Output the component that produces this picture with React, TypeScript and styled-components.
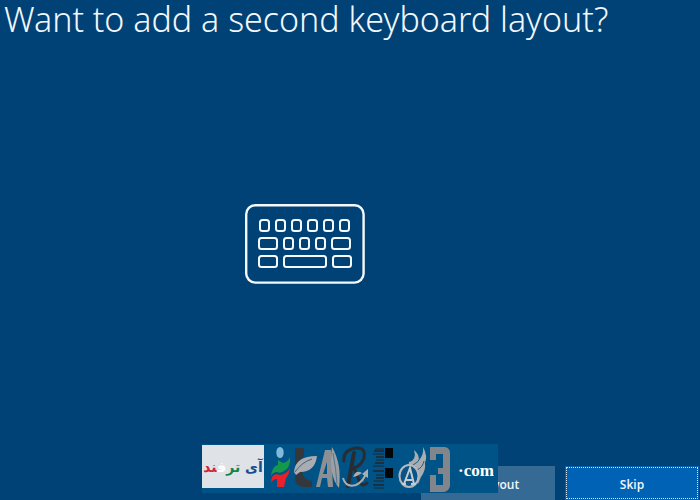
import React from "react";
import styled, { createGlobalStyle } from "styled-components";

const GlobalStyle = createGlobalStyle`
  * { box-sizing: border-box; }
  body {
    margin: 0;
    background: #004275;
    color: #fff;
    font-family: "Open Sans", "Noto Sans", sans-serif;
  }
`;

const Page = styled.div`
  display: flex;
  flex-direction: column;
  min-height: 100vh;
`;

const Title = styled.h1`
  margin: 0;
  padding: 0 4px;
  font-family: "Noto Sans", "Open Sans", sans-serif;
  font-size: 34px;
  line-height: 38px;
  font-weight: 300;
  color: #f2f7fc;
`;

const Stage = styled.main`
  flex: 1;
  display: flex;
  align-items: center;
  justify-content: center;
  padding: 0 90px 16px 0;
`;

const Footer = styled.footer`
  position: relative;
  display: flex;
  justify-content: flex-end;
  gap: 10px;
  padding: 0 1px 0 8px;
`;

const Button = styled.button<{ $primary?: boolean }>`
  width: 134px;
  height: 34px;
  padding: 2px 0 0;
  border: 0;
  outline: ${(p) => (p.$primary ? "1px dotted #d5e6f7" : "none")};
  outline-offset: -2px;
  background: ${(p) => (p.$primary ? "#0062b5" : "#356a94")};
  color: #f2f7fc;
  font-family: "Open Sans", sans-serif;
  font-size: 12px;
  font-weight: 600;
`;

const Watermark = styled.div`
  position: absolute;
  left: 202px;
  bottom: 7px;
  display: flex;
  width: 296px;
  height: 49px;
  background: #005386;
`;

const Plate = styled.div`
  width: 62px;
  height: 43px;
  margin-top: 1px;
  background: #dfe2e6;
  font-family: "DejaVu Sans", sans-serif;
  font-size: 14px;
  font-weight: 700;
  line-height: 44px;
  text-align: center;
  white-space: nowrap;
`;

const Ink = styled.span<{ $color: string }>`
  color: ${(p) => p.$color};
`;

const Domain = styled.span`
  padding-left: 2px;
  font-family: "Liberation Serif", serif;
  font-size: 17px;
  font-weight: 700;
  line-height: 54px;
`;

const keys: [number, number, number][] = [
  [15, 16, 9], [31, 16, 9], [47, 16, 9], [63, 16, 9], [79, 16, 9], [95, 16, 9],
  [14, 34, 18], [39, 34, 9], [55, 34, 9], [71, 34, 9], [87, 34, 18],
  [14, 52, 18], [39, 52, 42], [88, 52, 18],
];

function Keyboard() {
  return (
    <svg width="120" height="80" viewBox="0 0 120 80" fill="none" stroke="#f4f9fd" strokeWidth="2" aria-label="Keyboard" role="img">
      <rect x="1.2" y="1.2" width="117.4" height="77.4" rx="9" strokeWidth="2.4" />
      {keys.map(([x, y, w]) => (
        <rect key={`${x}-${y}`} x={x} y={y} width={w} height="11" rx="2.5" />
      ))}
    </svg>
  );
}

function Emblem() {
  return (
    <svg width="192" height="49" viewBox="264 444 192 49" aria-hidden="true">
      <ellipse cx="280" cy="452.5" rx="3.7" ry="5.5" fill="#7fb9dc" />
      <path d="M271 476Q272 466 278 465V460L283 463Q288 462 290 457Q291 467 284 471Q280 474 277 472Q273 472 271 476Z" fill="#14984c" />
      <path d="M271 483Q271 472 280 475Q287 474 290 468Q289 475 286 478L284 487H277V479Q273 479 271 483Z" fill="#e8202a" />
      <path d="M295 448H304V456L299 461L295 466ZM295 472L302 471Q303 480 312 481V487H303Q295 486 295 478Z" fill="#34383d" />
      <path d="M294 472Q295 456 317 456Q315 472 300 472L296 475Z" fill="#a9acb0" />
      <path d="M295 472Q302 462 312 459" fill="none" stroke="#4c6377" strokeWidth="1" />
      <path d="M316 487L325 450H331L333 487H328L327 478H322L320 487ZM323 474H327V462Z" fill="#8c9094" fillRule="evenodd" />
      <path d="M332 447Q342 464 339 488Q328 475 332 447Z" fill="#9ba0a4" />
      <path d="M333 453Q336 468 337 484" fill="none" stroke="#52758f" strokeWidth="1" />
      <g fill="none" stroke="#292c30" strokeLinecap="round">
        <path d="M344 461Q343 450 356 448Q366 447 364 458Q361 466 354 468L359 480Q362 488 367 483" strokeWidth="3" />
        <path d="M354 453L348 486" strokeWidth="4" />
      </g>
      <path d="M343 478Q346 488 356 485Q364 481 366 473" fill="none" stroke="#a8adb2" strokeWidth="2" />
      <path d="M353 477Q356 469 362 473Q358 476 353 477ZM362 474L368 469L368 478Z" fill="#a8adb2" />
      <g stroke="#20262c">
        <path d="M375 449H384M373 454H384M376 460H384M373 466H384M376 475H384M374 481H384M374 488H384" strokeWidth="1" />
        <path d="M374 451H384M376 457H384M375 463H384M373 471H384M376 478H384M373 485H384" strokeWidth="1.6" />
      </g>
      <path d="M385 448H393V458H385ZM385 468H393V478H385Z" fill="#050607" />
      <path d="M409 462Q417 460 414 450Q419 454 419 460Q424 455 423 447Q428 456 425 463Q426 470 421 477L418 484L408 470Z" fill="#a9acb0" />
      <path d="M413 465Q419 462 420 458M417 470Q423 467 424 461" fill="none" stroke="#235f86" strokeWidth="1" />
      <ellipse cx="409" cy="476" rx="9.5" ry="11" fill="#075488" stroke="#b5b8bc" strokeWidth="2" />
      <path d="M404 484L410 468L414 484M406 480H412M402 484H406M411 484H416" fill="none" stroke="#c9ccce" strokeWidth="2" />
      <path d="M430 447H445Q450 448 450 453V486Q449 491 444 492H430V475H436V485H443V474H438V468H443V454H436V460H430Z" fill="#82868b" />
    </svg>
  );
}

export default function App() {
  return (
    <Page>
      <GlobalStyle />
      <Title>Want to add a second keyboard layout?</Title>
      <Stage>
        <Keyboard />
      </Stage>
      <Footer>
        <Button type="button">Add layout</Button>
        <Button type="button" $primary>Skip</Button>
        <Watermark>
          <Plate dir="rtl" lang="fa">
            <Ink $color="#174e91">آی </Ink>
            <Ink $color="#168448">تر</Ink>
            <Ink $color="#ffffff">ف</Ink>
            <Ink $color="#cf2435">ند</Ink>
          </Plate>
          <Emblem />
          <Domain>·com</Domain>
        </Watermark>
      </Footer>
    </Page>
  );
}
